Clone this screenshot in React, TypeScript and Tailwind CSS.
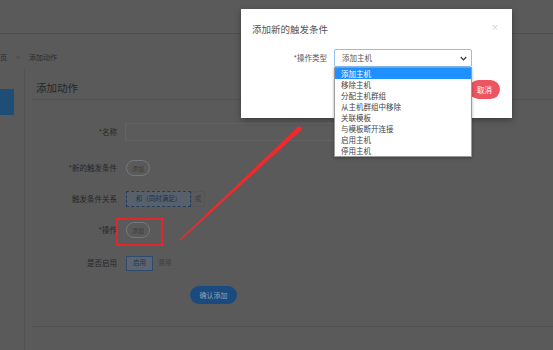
import React from "react";

const options = [
  "添加主机",
  "移除主机",
  "分配主机群组",
  "从主机群组中移除",
  "关联模板",
  "与模板断开连接",
  "启用主机",
  "停用主机",
];

const Label = ({ children }: { children: React.ReactNode }) => (
  <div className="w-[85px] shrink-0 pr-[1px] text-right text-[7.5px] leading-[10px] text-[#272727]">
    {children}
  </div>
);

const App = () => {
  return (
    <div
      className="relative h-[350px] w-[553px] overflow-hidden bg-[#5a5a5a]"
      style={{ fontFamily: '"Noto Sans CJK SC", "Noto Sans", sans-serif' }}
    >
      {/* page behind the mask */}
      <div className="h-[34px] border-b border-[#4f4f4f]" />
      <div className="flex h-[34px] items-start pt-[18px] text-[7px] leading-[10px] text-[#2c2c2c]">
        <span className="-ml-[7px]">首页</span>
        <span className="mx-[9px] text-[#444]">&gt;</span>
        <span>添加动作</span>
      </div>

      <div className="flex h-[282px]">
        <div className="w-[25px] shrink-0 border-r border-[#525252] pt-[21px]">
          <div className="h-[26px] w-[14px] bg-[#1e4e75]" />
        </div>

        <div className="ml-[8px] flex-1">
          <div className="h-[32px] border-b border-[#525252] pl-[3px] pt-[13px] text-[10.5px] leading-[13px] text-[#262626]">
            添加动作
          </div>

          <div className="flex h-[227px] flex-col border-b border-[#505050]">
            <div className="mt-[23px] flex h-[18px] items-center gap-[7px]">
              <Label>*名称</Label>
              <div className="h-[18px] w-[300px] border border-[#626262] bg-[#5b5b5b]" />
            </div>

            <div className="mt-[19px] flex h-[16px] items-center gap-[8px]">
              <Label>*新的触发条件</Label>
              <div className="flex h-[16px] w-[24px] items-center justify-center rounded-full border border-[#737780] text-[6px] text-[#3a3a3a]">
                添加
              </div>
            </div>

            <div className="mt-[15px] flex h-[16px] items-center gap-[8px]">
              <Label>触发条件关系</Label>
              <div className="flex h-[16px]">
                <div className="flex w-[65px] items-center justify-center border border-dashed border-[#233d5c] bg-[#58606b] text-[6.5px] text-[#1c3350]">
                  和（同时满足）
                </div>
                <div className="flex w-[14px] items-center justify-center border border-[#555] text-[6.5px] text-[#3c3c3c]">
                  或
                </div>
              </div>
            </div>

            <div className="mt-[15px] flex h-[16px] items-center gap-[8px]">
              <Label>*操作</Label>
              <div className="flex h-[16px] w-[24px] items-center justify-center rounded-full border border-[#737780] text-[6px] text-[#3a3a3a]">
                添加
              </div>
            </div>

            <div className="mt-[18px] flex h-[14px] items-center gap-[8px]">
              <Label>是否启用</Label>
              <div className="flex h-[15px] gap-[2px]">
                <div className="flex w-[27px] items-center justify-center border border-[#2f4b6b] bg-[#5b6470] text-[6.5px] text-[#1d3857]">
                  启用
                </div>
                <div className="flex w-[20px] items-center justify-center text-[6.5px] text-[#3e3e3e]">
                  禁用
                </div>
              </div>
            </div>

            <div className="mt-[16px] flex pl-[157px]">
              <div className="flex h-[18px] w-[47px] items-center justify-center rounded-full bg-[#1b4a7e] text-[7px] text-[#8fa3bd]">
                确认添加
              </div>
            </div>
          </div>
        </div>
      </div>

      {/* annotation: red box and arrow */}
      <div className="absolute left-[116px] top-[218px] h-[28px] w-[47px] border-2 border-[#e3262a]" />
      <svg className="pointer-events-none absolute left-0 top-0" width="553" height="350">
        <polygon
          points="180.4,240.4 179.6,239.6 297.3,127.2 300.7,130.8"
          fill="#ee2a2c"
        />
        <circle cx="299" cy="129" r="2.5" fill="#ee2a2c" />
      </svg>

      {/* modal */}
      <div className="absolute left-[241px] top-[9px] h-[109px] w-[271px] bg-white shadow-[0_2px_6px_rgba(0,0,0,0.35)]">
        <div className="flex items-start justify-between pl-[11px] pr-[13px] pt-[13px]">
          <div className="text-[9.5px] leading-[14px] text-[#555]">添加新的触发条件</div>
          <div className="text-[8px] leading-[10px] text-[#c8c8c8]">×</div>
        </div>

        <div className="mt-[13px] flex items-center">
          <div className="w-[86px] shrink-0 text-right text-[7.5px] text-[#555]">*操作类型</div>
          <div className="relative ml-[7px]">
            <div className="flex h-[18px] w-[138px] items-center justify-between rounded-[2px] border border-[#8fbff0] pl-[7px] pr-[4px] text-[7.5px] text-[#555]">
              <span>添加主机</span>
              <svg width="7" height="5" viewBox="0 0 7 5">
                <path d="M0.8 1 L3.5 3.8 L6.2 1" stroke="#333" strokeWidth="1.2" fill="none" />
              </svg>
            </div>
            <div className="absolute left-0 top-[18px] z-10 w-[138px] border border-[#9a9a9a] bg-white shadow-[0_1px_3px_rgba(0,0,0,0.3)]">
              {options.map((o, i) => (
                <div
                  key={o}
                  className={
                    i === 0
                      ? "h-[11px] bg-[#1e90ff] pl-[6px] text-[7.5px] leading-[11px] text-white"
                      : "h-[11px] pl-[6px] text-[7.5px] leading-[11px] text-[#444]"
                  }
                >
                  {o}
                </div>
              ))}
            </div>
          </div>
        </div>

        <div className="mt-[13px] flex justify-end pr-[12px]">
          <div className="flex h-[19px] w-[31px] items-center justify-center rounded-full bg-[#ec5560] text-[7.5px] text-white">
            取消
          </div>
        </div>
      </div>
    </div>
  );
};

export default App;
